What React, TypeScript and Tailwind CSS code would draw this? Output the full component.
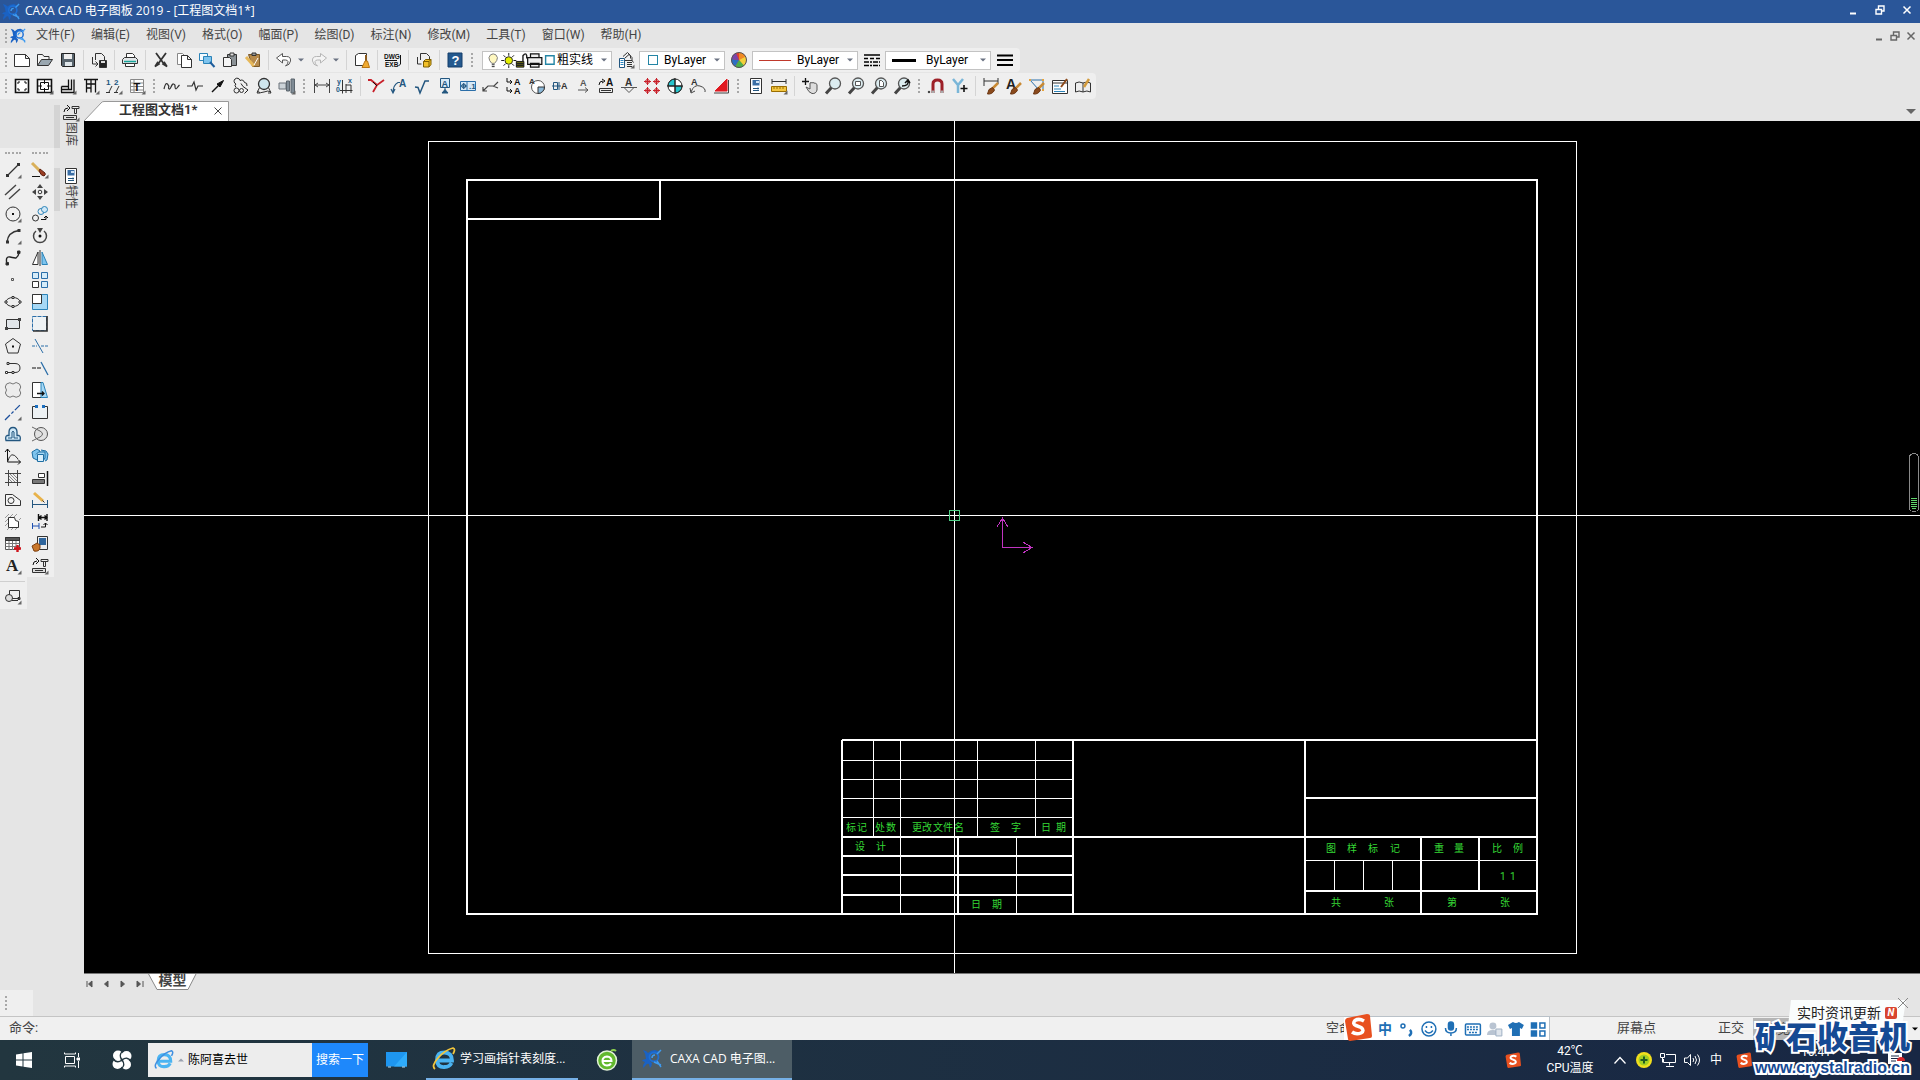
import type { ReactNode } from 'react';

const menus = ['文件(F)', '编辑(E)', '视图(V)', '格式(O)', '幅面(P)', '绘图(D)', '标注(N)', '修改(M)', '工具(T)', '窗口(W)', '帮助(H)'];

const A = ({ x = 4, y = 12, s = 10, c = '#333', t = 'A' }: any) => (
  <text x={x} y={y} fontSize={s} fontWeight="bold" fill={c} stroke="none" fontFamily="Liberation Sans, sans-serif">{t}</text>
);

const corner = <path d="M16.500 12.500v4h-4z" fill="#666" stroke="none" />;
const lens = <><path d="M6.500 9.500 1 15.500" stroke="#444" strokeWidth="3" /><circle cx="10" cy="5.500" r="5.500" fill="#dcecf0" stroke="#555" strokeWidth="1.300" /></>;
const brush = <><path d="M15 5 9 11" stroke="#c98a35" strokeWidth="2.500" /><path d="M9.500 9.500 6 11.500 4.500 16q5 .5 7-4z" fill="#8b4a1c" stroke="#6b3511" /></>;

// 16x16 drawings, keyed by command
const icons: Record<string, ReactNode> = {
  new: <path d="M.5 2.500h11l4 4v8h-15z M11.500 2.500v4h4" fill="#fff" />,
  open: <><path d="M.5 13.500v-11h5l1.500 2h5v3" fill="#f4f4f4" /><path d="m.5 13.500 4-6h11l-4 6z" fill="#9aa7b0" /></>,
  save: <><path d="M1.500 1.500h13v13h-12l-1-1z" fill="#58646d" stroke="#222" /><path d="M4 2h8v5H4z" fill="#eee" stroke="none" /><path d="M5 10h7v4H5z" fill="#dfe6ea" stroke="none" /></>,
  exp: <><path d="M4.500 8v-6.500h6l3 3V9 M1.500 5v7h5 M4.500 9.500l2.500 2.500-2.500 2.500" /><path d="M8.500 8.500h7v7h-7z" fill="#222" /><path d="M10 9h4v2h-4z" fill="#ddd" stroke="none" /></>,
  print: <><path d="M4.500 5V1.500h6l2 2V5" fill="#fff" /><path d="M2.500 5.500h11l2 2v4h-15v-4z" fill="#e2e6e8" /><path d="M2 9.500h12" stroke="#18a59b" strokeWidth="1.500" /><path d="M3.500 11.500h9v3h-9z" fill="#fff" /></>,
  cut: <><path d="M3 1l8 11 M13 1 5 12" strokeWidth="1.800" /><path d="M2 14.500 4.500 10.500l1.500 1.500z M14 14.500l-2.500-4L10 12z" strokeWidth="1.500" /></>,
  copy: <><path d="M1.500 1.500h5l3 3v8h-8z" fill="#fff" stroke="#888" /><path d="M5.500 3.500h6l4 4v8h-10z M11.500 3.500v4h4" fill="#fff" /></>,
  copybase: <><path d="M.5 1.500h8v7h-8z" fill="#f5fbff" stroke="#2b83b8" /><path d="M4.500 4.500h8v7h-8z" fill="#7ec4ee" stroke="#2b83b8" /><path d="m11 10 4.500 5" stroke="#1e5d9c" strokeWidth="2" /></>,
  paste: <><path d="M5.500 2.500h9v11h-9z" fill="#8b9296" /><path d="M8 1h4v3H8z" fill="#ddd" /><path d="M1.500 5.500h6l2 2v7h-8z" fill="#f5f5f5" /></>,
  match: <><path d="M3.500 2.500h11v12h-7z" fill="#b68a4c" stroke="#7c5a2a" /><path d="M7 1h4v2.500H7z" fill="#999" /><path d="M1 5l8 9" stroke="#e6b85a" strokeWidth="3" /><path d="M13 6 9 13" stroke="#fff" /></>,
  undo: <path d="M6.500 1.500v3h4q4.500 0 4 4.500-.5 4-5 5 3-2 2.500-4.500-.5-1.500-2.500-1.500h-3v3l-6-5z" fill="#fff" stroke="#555" />,
  redo: <path d="M9.500 1.500v3h-4Q1 4.500 1.500 9q.5 4 5 5-3-2-2.500-4.500Q4.500 8 6.500 8h3v3l6-5z" fill="#f4f4f4" stroke="#b5b5b5" />,
  clean: <><path d="M1.500 3.500l3-2h8v12h-11z" fill="#fff" /><path d="M12 3v7" stroke="#8b5a1c" strokeWidth="2" /><path d="m11 9-3 6.500h7.500l-2-6.500z" fill="#efaa32" stroke="#b87614" /></>,
  dwg: <><A x={-1} y={6.500} s={6.500} c="#111" t="DWG" /><A x={0} y={15} s={6.500} c="#111" t="EXB" /><path d="M0 8.500h12 M15.500 3v9l-2 2" stroke="#111" /></>,
  block: <><path d="M4.500 8v-6.500h6l3 3V8 M1.500 5v7h4" /><path d="m7.500 9.500 2-2h5.500v5l-2 2.500h-5.500z" fill="#f2c028" stroke="#7d5f00" /><path d="M7.500 9.500h5.500V15 m0-5.500 2-2" stroke="#7d5f00" /></>,
  help: <><path d="M1 1h14v14H1z" fill="#24598e" stroke="#153f6b" /><A x={4.500} y={13} s={13} c="#fff" t="?" /></>,
  layers: <><path d="M5 4.500 9.500.5l3 3v3 M7 6l4-3.500 3 3V9 M7 8.500h7l1.500 2" /><path d="M1.500 6.500h5v9h-5z" fill="#fff" stroke="#23567f" /><path d="M2.500 8.500h3m-3 2h3m-3 2h3" stroke="#2784c0" /><path d="M9 10.500h5M9 12.500h5M9 14.500h5" />{corner}</>,
  wheel: <><circle cx="8" cy="8" r="7.500" fill="#e23d2f" stroke="none" /><path d="M8 8V.5a7.500 7.500 0 0 1 6.500 4z" fill="#f08a24" stroke="none" /><path d="M8 8l6.500-3.500a7.500 7.500 0 0 1-2 9.500z" fill="#f4d03a" stroke="none" /><path d="M8 8l5 5.500a7.500 7.500 0 0 1-9 1z" fill="#4fb04a" stroke="none" /><path d="M8 8l-4 6.500A7.500 7.500 0 0 1 .5 7z" fill="#2e6fc4" stroke="none" /><path d="M8 8 .5 7A7.500 7.500 0 0 1 5 1z" fill="#7b45a8" stroke="none" /><circle cx="8" cy="8" r="7.500" stroke="#555" /></>,
  ltype: <><path d="M0 3h16" stroke="#000" strokeWidth="1.500" /><path d="M0 6.500h16" stroke="#000" strokeWidth="1.500" strokeDasharray="4 2" /><path d="M0 10h16M0 13.500h16" stroke="#000" strokeWidth="1.500" strokeDasharray="5 1 2 1" /></>,
  lweight: <path d="M0 3.500h16M0 8h16M0 13h16" stroke="#000" strokeWidth="2.200" />,

  sheet: <><path d="M1.500 1.500h13v13h-13z" fill="#fff" stroke="#111" strokeWidth="1.600" /><path d="M4 6V4h2m4 0h2v2m0 4v2h-2m-4 0H4v-2" stroke="#111" /></>,
  frame: <><path d="M.5 1.500h14v13H.5z" fill="#fff" stroke="#111" strokeWidth="1.600" /><path d="M3.500 4.500h8v7h-8z M7.500 1v5m0 4v4M0 8h5m5 0h5" stroke="#111" />{corner}</>,
  title: <><path d="M1.500 8.500h7v-7M1 14.500h13v-13M11.500 1.500v10H1M1.500 8.500v6M8.500 8.500v3" stroke="#111" strokeWidth="1.300" />{corner}</>,
  para: <><path d="M1 1.500h14M3.500 1.500v13M3.500 6h9M8 1.500v13M12.500 1.500v13M3.500 10h5" stroke="#111" strokeWidth="1.300" />{corner}</>,
  serial: <><A x={0} y={7} s={8} c="#23567f" t="1" /><A x={8} y={7} s={8} c="#23567f" t="2" /><path d="M3 14l3-6m4 6 3-6M0 14.500h4m4 0h4" />{corner}</>,
  btable: <><path d="M1.500 1.500h13v13h-13z M1.500 5h13M1.500 8.500h13M1.500 12h13 M5 1.500v13" fill="#fff" stroke="#888" /><A x={4.500} y={12.500} s={11} c="#111" t="T" />{corner}</>,
  wave: <path d="M0 11q1.500-7 3.500-5t1 4q1 2.500 2.500-1t2.500-3q2 .5 1.500 3 .5 3 2 1t2.500-3" strokeWidth="1.200" />,
  breakl: <path d="M0 8h5l2-4 2 8 2-4h5" strokeWidth="1.200" />,
  arrow: <><path d="M2 14 9 7" stroke="#111" strokeWidth="1.500" /><path d="M13.500 2.500 7 6l3 3z" fill="#111" stroke="#111" /></>,
  gear: <><path d="M3 6a3 3 0 1 1 4-3.500 3 3 0 0 1 4.500 2q3 0 2.500 3.500M3 6q-2 1 0 3.500M8 5.500l2 3 5 3.500-3.500 3.500" stroke="#222" /><circle cx="3.500" cy="12.500" r="2.500" /><circle cx="8.500" cy="12.500" r="2" /></>,
  magnify: <><circle cx="8" cy="6" r="5.500" fill="#cfe6ee" strokeWidth="1.300" /><path d="M3.500 9.500 1 15h3m8.500-5.500L15 15h-3" /><path d="M1 13q3 3 7 1t7 0" /></>,
  bolt: <><path d="M0 5h7v6H0z" fill="#ccd3d8" stroke="#6a737b" /><path d="M7.500 3h3v10h-3z M12 1h3.500v14H12z" fill="#7f8b95" stroke="#5b656d" />{corner}</>,
  dim: <path d="M.5 1v14M15.500 1v14 M1 7h14M4 5 1 7l3 2m8-4 3 2-3 2" stroke="#444" />,
  dimcoord: <><path d="M5.500 2v13.500M3 12.500h12.500M9 6v9M9 7h5v8" /><A x={0} y={6} s={7} c="#23567f" t="y" /><A x={11} y={5} s={7} c="#23567f" t="x" /><A x={-1} y={14} s={7} c="#23567f" t="0" /></>,
  chamfer: <><path d="M0 2h3l6 5" stroke="#c8202a" strokeWidth="1.800" /><path d="M5 14 9 7l7-5" stroke="#c8202a" strokeWidth="1.800" /><path d="m5 4 4 4" stroke="#111" /></>,
  leader: <><path d="M2 15q0-8 5-10.500h2M0 11l2 4 2-4" stroke="#23567f" strokeWidth="1.200" /><A x={8} y={9} s={10} c="#23567f" /></>,
  rough: <path d="M1 9l3 .5L6 15l5-12h4" stroke="#23567f" strokeWidth="1.500" />,
  datum: <><path d="M3.500.5h9v9h-9z" fill="#d6e9f7" stroke="#23567f" /><A x={4.500} y={8.500} s={9} c="#23567f" /><path d="M8 10v2m-3 3h6l-3-3.500z" fill="#23567f" stroke="#23567f" /></>,
  tol: <><path d="M.5 3.500h15v9H.5z M7 3.500v9" fill="#d6e9f7" stroke="#2b6ea8" /><circle cx="3.700" cy="8" r="2" stroke="#23567f" /><path d="M1 8h6M3.700 5v6" stroke="#23567f" /><A x={9} y={11} s={8} c="#23567f" t=".1" /></>,
  weld: <path d="M0 13l5-5h6l4-4M0 9v4h4 M10 8l5 2" stroke="#444" strokeWidth="1.200" />,
  sect: <><A x={8} y={7} s={9} c="#111" /><A x={8} y={16} s={9} c="#111" /><path d="M1 0v4h5M4 2l2 2-2 2M1 9v4h5m-2-2 2 2-2 2" stroke="#111" /></>,
  rot: <><circle cx="9" cy="9" r="6.500" fill="#fff" stroke="#555" /><path d="M9 9h6.500a6.500 6.500 0 0 1-6.500 6.500z" fill="#8bb8d8" /><A x={0} y={6} s={8} /></>,
  mirra: <><path d="M1.500 4.500h4v7h-4zM0 8h9M7 4v8" stroke="#23567f" /><A x={9} y={11} s={9} /></>,
  aright: <><A x={5} y={8} s={9} c="#555" /><path d="M3 12h10m-3-2.500 3 2.500-3 2.500" stroke="#555" /></>,
  stamp: <><path d="M1 7q0-4 4-4M4 1l3 2-3 2" stroke="#111" /><A x={8} y={8} s={10} c="#111" /><path d="M1.500 10.500h13v4h-13z M3 12.500h10" fill="#eee" /></>,
  aflat: <><A x={4} y={8} s={10} /><path d="M0 9.500h16M3 9.500l5 5 5-5" stroke="#555" /></>,
  reddots: <g stroke="#c8202a"><path d="M0 3.500h7M3.500 0v7M9 3.500h7M12.500 0v7M0 12.500h7M3.500 9v7M9 12.500h7M12.500 9v7" /><circle cx="3.500" cy="3.500" r="2" /><circle cx="12.500" cy="3.500" r="2" /><circle cx="3.500" cy="12.500" r="2" /><circle cx="12.500" cy="12.500" r="2" /></g>,
  center: <><circle cx="8" cy="8" r="7" fill="#fff" stroke="#222" /><path d="M8 8V1a7 7 0 0 0-7 7zM8 8v7a7 7 0 0 0 7-7z" fill="#27c4cc" stroke="#222" /><path d="M8 0v16M0 8h16" stroke="#222" /></>,
  arcdim: <><A x={1} y={7} s={9} /><path d="M1 14Q4 6 10 8t5 6M0 10l1 5 4-2" stroke="#444" /></>,
  taper: <><path d="M14 1v12H2z" fill="#e01820" stroke="#e01820" /><path d="M1 15h14.500V2" stroke="#444" /></>,
  props: <><path d="M2.500.5h11v15h-11z" fill="#fff" /><path d="M4.500 2h7v5.500h-7z" fill="#3a6ea5" stroke="none" /><path d="M8 3h3v2H8z" fill="#cfe3f5" stroke="none" /><path d="M5 10.500h6M5 12.500h6M10 9.500v2" stroke="#23567f" /></>,
  measure: <><path d="M1 1v5M15 1v5M1 3.500h14" /><path d="M.5 8.500h15v5H.5z" fill="#f3c641" stroke="#9a6d00" /><path d="M3 9v2m3-2v2m3-2v2m3-2v2" stroke="#9a6d00" />{corner}</>,
  pan: <><path d="M3.500 0v7M0 3.500h7" stroke="#111" strokeWidth="1.300" /><path d="M4 9l4 2V5q1-1 2 0 1-1 2 0 2 0 3 1.500V12q-1 4-5 3.500-3-.5-6-6.500z" fill="#ddd" stroke="#555" /></>,
  zoom: lens,
  zoomwin: <>{lens}<path d="M7.500 3.500h5v4h-5z" fill="#fff" stroke="#555" /></>,
  zoompage: <>{lens}<path d="M8.500 2.500h2l2 2v4h-4z" fill="#fff" stroke="#555" /></>,
  zoomback: <>{lens}<path d="M8 8q7 0 6-5M11 5l3-3 2 3" stroke="#111" strokeWidth="1.500" /></>,
  magnet: <><path d="M4 15V6q0-4 4.500-4T13 6v9" stroke="#9d2027" strokeWidth="3" /><path d="M4 12.500V15m9-2.500V15" stroke="#aaa" strokeWidth="3" /><circle cx="0" cy="14" r=".8" fill="#111" /></>,
  snap: <><path d="M1 1l5 6L11 1M6 7v8" stroke="#7ab6d8" strokeWidth="2.500" /><path d="M12 7v7m-3.500-3.500h7" stroke="#111" strokeWidth="1.600" /></>,
  dimbrush: <><path d="M1 0v8M15 0v6M1 3h14" />{brush}</>,
  txtbrush: <><A x={0} y={11} s={14} c="#222" />{brush}</>,
  blkbrush: <><path d="M1 2h13v10M1 2l9 10" stroke="#2b6ea8" /><path d="M0 1h2v2H0zM13 1h2v2h-2zM13 11h2v2h-2z" fill="#e8a33a" stroke="none" />{brush}</>,
  style: <><path d="M.5 2.500h15v13H.5z M.5 5h15" fill="#fff" /><path d="M2 8h5m-5 3h7m-7 2.500h11" stroke="#2b83b8" /><path d="m15 1-6 8" stroke="#8b4a1c" strokeWidth="2" /></>,
  book: <><path d="M8 5q-4-2-7.500 0v9q3.500-2 7.500 0 4-2 7.500 0V5q-3.500-2-7.500 0v9" fill="#eee" /><path d="m14 1-5 8" stroke="#d29a3c" strokeWidth="2.500" /></>,

  line: <><path d="M2.500 13.500l11-11" strokeWidth="1.300" /><path d="M1 12h3v3H1zM12 1h3v3h-3z" fill="#333" stroke="none" />{corner}</>,
  parallel: <path d="M0 11 11 1M4 15 15 5" stroke="#444" strokeWidth="1.400" />,
  circle: <><circle cx="8" cy="8" r="7" /><path d="M7 7h2v2H7z" fill="#111" stroke="none" />{corner}</>,
  arc: <><path d="M2 14Q3 4 14 2.500" strokeWidth="1.300" /><path d="M1 12.500h3v3H1zM12.500 1h3v3h-3z" fill="#333" stroke="none" />{corner}</>,
  spline: <><path d="M2 14Q0 6 5 7t6 1q3-2 2.500-5" stroke="#222" strokeWidth="1.400" /><path d="M1 12.500h2.500V15H1zM12.500 1H15v2.500h-2.500z" fill="#222" /></>,
  point: <path d="M6.500 6.500h2v2h-2z" stroke="#555" />,
  ellipse: <><ellipse cx="8" cy="8" rx="7" ry="4.500" /><path d="M0 7h2v2H0zM14 7h2v2h-2zM7 2.500h2v2H7zM7 11.500h2v2H7z" fill="#fff" stroke="#333" /></>,
  rect: <><path d="M1.500 3.500h13v9h-13z" fill="#e2e6ea" /><path d="M0 11h3v3H0zM13 2h3v3h-3z" fill="#444" stroke="none" /></>,
  poly: <><path d="M8 .5 15.500 6 13 15H3L.5 6z" /><path d="M7 7.500h2v2H7z" fill="#111" stroke="none" /></>,
  pline: <><path d="M4 3.500h6q5 0 5 4.500t-5 4.500H2" /><path d="M2 2.500h2v2H2zM.5 11.500h2v2h-2zM7 11.500h2v2H7z" fill="#fff" /></>,
  cloud: <path d="M8 2q3-3 6.500 0 2.500 3 0 6 2.500 3 0 6-3.500 2.500-6.500 0-3 2.500-6 0-3-3-.5-6-2.500-3 0-6Q5-.5 8 2z" fill="#ececec" stroke="#777" />,
  ctrline: <><path d="M0 16 16 0" stroke="#1c4f9c" strokeWidth="1.300" strokeDasharray="7 2 3 2" />{corner}</>,
  offset: <><path d="M1 14.500h14q1-4-1-5h-2V6q0-4.500-4-4.500T4 6v3.500H2q-2 1-1 5z" fill="#cfe8f7" stroke="#23567f" strokeWidth="1.300" /><path d="M3 12h4V6q1-1.500 2 0v6h4" stroke="#23567f" /></>,
  func: <><path d="M2.500 1v13h13M0 4l2.500-3L5 4m8 7.500 2.500 2.500-2.500 2.500" stroke="#111" /><path d="M2.500 14Q6 1 13 11" /></>,
  hatch: <><path d="M3.500 0v16M12.500 0v16M0 3.500h16M0 12.500h16" stroke="#444" /><path d="m4 6 6 6M4 9l3 3M5 4l7 7M8 4l4 4" stroke="#888" /></>,
  region: <><path d="M.5 2.500h7l8 6v5h-15z" fill="#f5f5f5" /><circle cx="6" cy="8.500" r="3" /></>,
  detail: <><path d="M3.500 3.500h6q0 4 4 4v6h-10z" fill="#fff" /><path d="m0 4 4-4M0 8l3-3M0 12l3-3M5 3l3-3M9 3l3-3M14 6l2-2M2 16l2-2m2 2 2-2m2 2 2-2" stroke="#999" /></>,
  table: <><path d="M.5 1.500h14v12H.5z" fill="#fff" stroke="#555" /><path d="M.5 1.500h14v3H.5z" fill="#555" /><path d="M.5 7.500h14M.5 10.500h14M4 5v9M7.500 5v9M11 5v9" stroke="#777" /><path d="M12.500 9v7M9 12.500h7" stroke="#d0151c" strokeWidth="2.400" /></>,
  text: <><text x="1" y="13" fontSize="17" fontWeight="bold" fill="#222" stroke="none" fontFamily="Liberation Serif, serif">A</text>{corner}</>,
  shape: <><path d="M4.500 2.500h10v8h-10z" /><circle cx="4" cy="10" r="3.500" fill="#ddd" /><path d="M7 12.500h6M13 9.500h2v2h-2z" />{corner}</>,

  erase: <><path d="M0 1l8 8" stroke="#d9b05a" strokeWidth="3" /><path d="m8 7 5 4q1 2-1 3-3 0-5-5z" fill="#9b3d22" stroke="#5d2010" /><path d="M0 14.500h8" stroke="#111" />{corner}</>,
  move: <><path d="M8 0l3 4H5zM8 16l3-4H5zM0 8l4-3v6zM16 8l-4-3v6z" fill="#444" stroke="none" /><circle cx="8" cy="8" r="1.800" /></>,
  mcopy: <><circle cx="3.500" cy="12" r="3" /><circle cx="9" cy="5.500" r="3" stroke="#2b83b8" /><circle cx="12.500" cy="3.500" r="3" fill="#cfe8f7" stroke="#2b83b8" /><path d="M9 13.500h5V10m-2 2 2-2 2 2" stroke="#111" /></>,
  rotate: <><path d="M4 3a6.500 6.500 0 1 0 8 0" stroke="#444" strokeWidth="1.500" /><path d="M5 0h6L8 5z" fill="#444" stroke="none" /><circle cx="8" cy="8" r="1.500" fill="#111" stroke="none" /></>,
  mirror: <><path d="M.5 14.500 6 2v12.500z" fill="#fff" /><path d="M15.500 14.500 10 2v12.500z" fill="#7ec4ee" stroke="#2b83b8" /><path d="M8 0v16" /></>,
  array: <><path d="M.5 9.500h6v6h-6z" fill="#fff" /><path d="M.5.5h6v6h-6zM9.500.5h6v6h-6zM9.500 9.500h6v6h-6z" fill="#d6ecf9" stroke="#2b6ea8" /></>,
  scale: <><path d="M.5.5h15v15H.5z" fill="#a6d8f5" stroke="#2b83b8" /><path d="M.5.5h9v9h-9z" fill="#fff" /></>,
  stretch: <><path d="M.5.5h14v14H.5z" fill="#eef2f4" stroke="#2b6ea8" strokeDasharray="4 1" /><path d="M15 0v15H1" stroke="#333" strokeWidth="1.700" /></>,
  trim: <><path d="M0 8h5M9 8h7" stroke="#2b6ea8" strokeDasharray="3 1" /><path d="m3 1 8 14" stroke="#2b6ea8" /></>,
  extend: <><path d="M0 8h9" stroke="#111" strokeDasharray="4 1" /><path d="m9 2 7 13" stroke="#2b6ea8" strokeWidth="1.300" /></>,
  scalex: <><path d="M.5.5h10v15H.5z" fill="#fff" /><path d="M9 .5h2l4.500 15H9z" fill="#a6d8f5" stroke="#2b83b8" /><path d="M5 11.500h7m-2-2 2 2-2 2" stroke="#111" strokeWidth="1.300" /></>,
  brk: <><path d="M4 2.500H.5v12h15v-12H12" fill="#eef2f4" /><path d="M3 1h3v3H3zM10 1h3v3h-3z" fill="#1c6fc0" stroke="none" /></>,
  chain: <><circle cx="9" cy="8" r="6.500" fill="#e2e2e2" stroke="#555" /><path d="M0 1l8 4q5 3 0 6l-8 4" stroke="#666" /></>,
  explode: <><path d="m0 4 5-3 3 2-3 9-4-2zM9 2l5 1 2 3-1 6-2 1" fill="#7ec4ee" stroke="#1e6ea3" /><path d="M4 6.500 6.500 4H13v6l-2 3" fill="#a6d8f5" stroke="#1e6ea3" /><path d="M5.500 6.500h6v7h-6z" fill="#d8effc" stroke="#1e6ea3" /></>,
  align: <><path d="M.5 9.500h12v4H.5z" fill="#777" /><path d="M6.500 3.500h6v4h-6z" fill="#fff" /><path d="M15.500 1v15" stroke="#111" strokeWidth="1.500" /></>,
  dimedit: <><path d="M.5 8v8M15.500 8v8M1 12.500h14" stroke="#23567f" /><path d="m2 1 9 8" stroke="#e8b24a" strokeWidth="3" /><path d="m10.500 8.500 2 2" stroke="#333" /></>,
  dimswap: <><path d="M6.500 0v7M15 0v7M6.500 3.500H15M9.500 1.500 7 3.500l2.500 2m3-4 2.500 2-2.500 2" stroke="#111" strokeWidth="1.400" /><path d="M.5 9v6M7 9v6M1 12h6" stroke="#1c4fb0" /><path d="M9 13h4.500V9m-2 2 2-2 2 2" stroke="#111" /></>,
  propbrush: <><path d="M5.500.5h10v13h-10z" fill="#eee" /><path d="M7 2h7v7H7z" fill="#2f659c" stroke="none" /><path d="M8 9 5 7l-5 3 2 5q5 1 6-3z" fill="#c9772b" stroke="#7c3f10" /></>,
  toolset: <><path d="M1 7q0-4 4-4M4 0l3 3-3 3" stroke="#111" /><path d="M9 1.500h7v2H9zM11.500 3.500h2v5h-2z" fill="#eee" /><path d="M.5 10.500h13v4H.5zM3 12.500h8" fill="#ddd" />{corner}</>,
};

const row1a = ['new', 'open', 'save', '|', 'exp', '|', 'print', '|', 'cut', 'copy', 'copybase', 'paste', 'match', '|', 'undo', 'v', 'redo', 'v', '|', 'clean', '|', 'dwg', '|', 'block', '|', 'help', ':'];
const row2 = ['sheet', 'frame', 'title', 'para', 'serial', 'btable', ':', 'wave', 'breakl', 'arrow', 'gear', 'magnify', 'bolt', ':', 'dim', 'dimcoord', '|', 'chamfer', 'leader', 'rough', 'datum', 'tol', 'weld', 'sect', 'rot', 'mirra', 'aright', 'stamp', 'aflat', 'reddots', 'center', 'arcdim', 'taper', ':', 'props', 'measure', '|', 'pan', 'zoom', 'zoomwin', 'zoompage', 'zoomback', ':', 'magnet', 'snap', '|', 'dimbrush', 'txtbrush', 'blkbrush', 'style', 'book'];
const drawTools = ['line', 'parallel', 'circle', 'arc', 'spline', 'point', 'ellipse', 'rect', 'poly', 'pline', 'cloud', 'ctrline', 'offset', 'func', 'hatch', 'region', 'detail', 'table', 'text'];
const editTools = ['erase', 'move', 'mcopy', 'rotate', 'mirror', 'array', 'scale', 'stretch', 'trim', 'extend', 'scalex', 'brk', 'chain', 'explode', 'align', 'dimedit', 'dimswap', 'propbrush', 'toolset'];

function Icon({ name }: { name: string }) {
  return (
    <svg viewBox="0 0 16 16" className="size-4 shrink-0 overflow-visible" fill="none" stroke="#333">
      {icons[name]}
    </svg>
  );
}

function Caret({ className = 'fill-gray-500' }: { className?: string }) {
  return <svg viewBox="0 0 8 4" className={`w-1.5 h-1 shrink-0 ${className}`}><path d="M0 0h8L4 4z" /></svg>;
}

function Grip() {
  return <span className="w-3 shrink-0 flex justify-center"><span className="h-3.5 border-l-2 border-dotted border-[#a8a8a8]" /></span>;
}

function ToolItems({ items }: { items: string[] }) {
  return (
    <>
      {items.map((n, i) => {
        if (n === '|') return <span key={i} className="w-2 shrink-0 flex justify-center"><span className="h-5 w-px bg-[#d4d4d4]" /></span>;
        if (n === ':') return <Grip key={i} />;
        if (n === 'v') return <button key={i} aria-label="more" className="w-3 shrink-0 flex justify-center"><Caret /></button>;
        return <button key={i} aria-label={n} className="w-[23px] shrink-0 flex justify-center"><Icon name={n} /></button>;
      })}
    </>
  );
}

function Combo({ label, value, width, children }: { label: string; value: string; width: string; children: ReactNode }) {
  return (
    <label className={`h-[19px] shrink-0 bg-white border border-[#c3c3c3] flex items-center pr-1 text-xs text-black ${width}`}>
      {children}
      <select aria-label={label} className="appearance-none bg-transparent flex-1 min-w-0 outline-none leading-4">
        <option>{value}</option>
      </select>
      <Caret />
    </label>
  );
}

function CaxaLogo({ className = 'size-4' }: { className?: string }) {
  return (
    <svg viewBox="0 0 20 20" className={`shrink-0 ${className}`} fill="none">
      <path d="M1 1q4 1 5 3 3-3 7-3 4 1 5 4-5-3-8-1-3 3-2 7 0 2 2 3 0 3-2 5l-1-4q-2-1-3 1l-3 3q0-4 2-6-2-1-3-1 1-2 4-2 0-5-3-9z" fill="#1a62c4" />
      <circle cx="12" cy="8" r="4.500" stroke="#1d6fd6" strokeWidth="1.800" />
      <path d="M10 9q0-3 3-3M15 12l4 6M12 13l7 3M15 5l4-4" stroke="#3e9bf0" strokeWidth="1.500" />
    </svg>
  );
}

function WinControls({ color, gap }: { color: string; gap: string }) {
  return (
    <div className={`flex items-center ${gap} ${color}`}>
      <button aria-label="最小化"><svg viewBox="0 0 10 10" className="size-2.5" stroke="currentColor" strokeWidth="2"><path d="M2 8.500h6" /></svg></button>
      <button aria-label="还原"><svg viewBox="0 0 10 10" className="size-2.5" fill="none" stroke="currentColor" strokeWidth="1.400"><path d="M1 4.500h5.500V9H1zM3.500 4V1H9v5H7" /></svg></button>
      <button aria-label="关闭"><svg viewBox="0 0 10 10" className="size-2.5" stroke="currentColor" strokeWidth="1.500"><path d="m1.500 1.500 7 7m0-7-7 7" /></svg></button>
    </div>
  );
}

// sheet labels, one x per character
const labels: { t: string; xs: number[]; y: number }[] = [
  { t: '标记', xs: [851, 862], y: 831 },
  { t: '处数', xs: [880, 891], y: 831 },
  { t: '更改文件名', xs: [917, 927, 938, 948, 959], y: 831 },
  { t: '签字', xs: [995, 1016], y: 831 },
  { t: '日期', xs: [1046, 1061], y: 831 },
  { t: '设计', xs: [860, 881], y: 850 },
  { t: '日期', xs: [976, 997], y: 908 },
  { t: '图样标记', xs: [1331, 1352, 1373, 1395], y: 852 },
  { t: '重量', xs: [1439, 1459], y: 852 },
  { t: '比例', xs: [1497, 1518], y: 852 },
  { t: '11', xs: [1505, 1515], y: 880 },
  { t: '共张', xs: [1336, 1389], y: 906 },
  { t: '第张', xs: [1452, 1505], y: 906 },
];

function Drawing() {
  return (
    <svg viewBox="84 121 1836 852" className="block size-full" fill="none" stroke="#fff" shapeRendering="crispEdges">
      <path d="M428.500 141.500h1148v812h-1148z" />
      <path strokeWidth="2" d="M467 180h1070v734H467z M467 219h193v-39" />
      <path strokeWidth="2" d="M842 740h695M842 740v174M1073 740v174M1305 740v174M842 837h695M958 837v77M842 856h231M842 875h231M842 895h231M1305 798h232M1305 891h232M1421 837v77M1479 837v54" />
      <path d="M842 760.500h231M842 779.500h231M842 798.500h231M842 817.500h231M873.500 740v97M900.500 740v174M977.500 740v97M1035.500 740v97M1016.500 837v77M1305 860.500h232M1334.500 860v31M1363.500 860v31M1392.500 860v31" />
      {labels.map((l, i) => (
        <text key={i} x={l.xs.map((x) => x - 5).join(' ')} y={l.y} fontSize="10" fill="#35d835" stroke="none">{l.t}</text>
      ))}
      {/* crosshair */}
      <path d="M954.500 0v1100M0 515.500h2000" />
      <path d="M949.500 510.500h10v10h-10z" stroke="#4ecf86" />
      {/* UCS axes */}
      <path d="M1002.500 518v29.500h30M997 527l5.500-9 5.500 9M1023 542l9 5.500-9 5.500" stroke="#c034c0" />
      <rect x="1909.500" y="453.500" width="9" height="58" rx="4" stroke="#8a8a8a" />
      <path d="M1911 498.500h6M1911 500.500h6M1911 502.500h6M1911 504.500h6M1911 506.500h6M1912 508.500h4" stroke="#5fd66b" />
    </svg>
  );
}

function SogouS({ className }: { className: string }) {
  return (
    <svg viewBox="0 0 28 28" className={`shrink-0 ${className}`} fill="none">
      <path d="M3 5 23 1q3 0 3 2l2 20q0 2-2 2L6 28q-2 0-2-2L1 8q0-2 2-3z" fill="#e8501f" />
      <path d="M20 8q-5-3-9-.5-3 3.500 1 5l5 2q4 3 0 5.500-5 2-9-1" stroke="#fff" strokeWidth="3.500" />
    </svg>
  );
}

function IELogo({ className, ring = '#f3c63c' }: { className: string; ring?: string }) {
  return (
    <svg viewBox="0 0 24 24" className={`shrink-0 ${className}`} fill="none">
      <path d="M5 13.500h15q0-8-7.500-8T5 13t7.500 7q5 0 7-4" stroke="#4ab4f2" strokeWidth="3.800" />
      <path d="M3 22q-4-3 3-11T21 1q3 1 0 6" stroke={ring} strokeWidth="1.800" />
    </svg>
  );
}

function ImeBar() {
  return (
    <div className="absolute right-[370px] bottom-0 h-6 w-[206px] bg-white border-r border-t border-[#b9c1c8] flex items-center pl-[30px] text-[#1f6fb5]">
      <SogouS className="size-7 absolute left-0 -top-1" />
      <span className="w-[22px] shrink-0 text-center text-sm font-bold">中</span>
      <svg viewBox="0 0 22 16" className="w-[22px] h-4" fill="none" stroke="currentColor"><circle cx="7" cy="5" r="2" strokeWidth="1.500" /><path d="M14 9q3 3-1 6" strokeWidth="2.500" /></svg>
      <svg viewBox="0 0 22 16" className="w-[22px] h-4" fill="none" stroke="currentColor" strokeWidth="1.500"><circle cx="11" cy="8" r="7" /><path d="M8.500 5v2m5-2v2M7 9.500q4 5 8 0" /></svg>
      <svg viewBox="0 0 22 16" className="w-[22px] h-4" fill="none" stroke="currentColor" strokeWidth="1.500"><rect x="8.500" y="1" width="5" height="8" rx="2.500" fill="currentColor" /><path d="M5.500 7q0 5 5.500 5t5.500-5M11 12v3" /></svg>
      <svg viewBox="0 0 22 16" className="w-[22px] h-4" fill="none" stroke="currentColor" strokeWidth="1.500"><rect x="3.500" y="3" width="15" height="11" rx="1" /><path d="M5 6h12M5 8.500h12M7 11.500h8" strokeDasharray="2 1" /></svg>
      <svg viewBox="0 0 22 16" className="w-[22px] h-4" fill="#b9c4d2"><circle cx="10" cy="5" r="3.500" /><path d="M4 14q0-5 6-5t5 5z" /><path d="M13 8h6v7h-6z" fill="#dfe5ec" stroke="#9fb0c4" /></svg>
      <svg viewBox="0 0 22 16" className="w-[22px] h-4" fill="currentColor"><path d="m3 4 5-3q3 2 6 0l5 3-2 4-2-1v8H7V7L5 8z" /></svg>
      <svg viewBox="0 0 22 16" className="w-[22px] h-4" fill="none" stroke="currentColor" strokeWidth="1.500"><path d="M4.500 2h5v5h-5zM4.500 10h5v5h-5z" fill="currentColor" /><path d="M13 2h5v5h-5zM13 10h5v5h-5z" /></svg>
    </div>
  );
}

export default function App() {
  return (
    <div className="relative h-screen flex flex-col overflow-hidden bg-[#e5e5e5] text-[13px] leading-4 text-[#444] font-['Roboto','Noto_Sans_CJK_SC',sans-serif]">
      {/* Title bar */}
      <header className="h-[23px] shrink-0 bg-[#2a5699] text-white flex items-center pl-0.5 pr-2">
        <CaxaLogo className="size-[18px]" />
        <h1 className="ml-[5px] flex-1 pb-0.5 text-xs font-['Open_Sans','Noto_Sans_CJK_SC',sans-serif]">CAXA CAD 电子图板 2019 - [工程图文档1*]</h1>
        <WinControls color="text-white pb-1" gap="gap-[17px]" />
      </header>

      {/* Menu bar */}
      <nav className="h-[25px] shrink-0 flex items-center pr-1">
        <span className="w-2.5 flex"><Grip /></span>
        <CaxaLogo />
        <div className="flex flex-1 gap-4 pl-2.5 pb-0.5 text-xs">
          {menus.map((m) => <button key={m} className="whitespace-nowrap">{m}</button>)}
        </div>
        <WinControls color="text-[#666]" gap="gap-1.5" />
      </nav>

      {/* Toolbars */}
      <div className="flex shrink-0">
        <div className="h-6 bg-[#efefef] rounded-r flex items-center pr-1">
          <span className="w-2.5 shrink-0 flex"><Grip /></span>
          <ToolItems items={row1a} />
          <div className="flex items-center gap-0.5 pl-1">
            <Combo label="图层" value="粗实线" width="w-[130px]">
              <svg viewBox="0 0 74 18" className="w-[70px] h-[17px] ml-1 shrink-0" fill="none" stroke="#222">
                <path d="M5 12q-3-3-3-6 1-4 4.500-4T11 6q0 3-3 6z" fill="#fff8c0" stroke="#777" /><path d="M5 13.500h3M5 15.500h3" />
                <circle cx="23" cy="9" r="4" fill="#e4f000" /><path d="M23 1v3m0 10v3M15 9h3m10 0h3M17.500 3.500l2 2m7 7 2 2m0-11-2 2m-7 7-2 2" stroke="#111" />
                <path d="M31 10h8v6h-8z" fill="#77780c" stroke="#111" /><path d="M38 10V4q3-4 4 0v3M31 12h8M31 14h8" strokeWidth="1.500" />
                <path d="M46 6V2h9v4M43 6h15v7H43zM46 12h9v4h-9z" fill="#eee" stroke="#111" strokeWidth="1.300" />
                <path d="M62 4h9v9h-9z" fill="#fff" stroke="#2385a5" strokeWidth="1.500" />
              </svg>
            </Combo>
            <ToolItems items={['layers']} />
            <Combo label="颜色" value="ByLayer" width="w-[86px]">
              <span className="size-2.5 ml-2 mr-1.5 border border-[#2385a5] bg-white shrink-0" />
            </Combo>
            <ToolItems items={['wheel']} />
            <Combo label="线型" value="ByLayer" width="w-[106px]">
              <span className="w-8 h-px mx-1.5 bg-[#c0392b] shrink-0" />
            </Combo>
            <ToolItems items={['ltype']} />
            <Combo label="线宽" value="ByLayer" width="w-[106px]">
              <span className="w-6 h-[3px] ml-1.5 mr-2.5 bg-black shrink-0" />
            </Combo>
            <ToolItems items={['lweight']} />
          </div>
        </div>
      </div>
      <div className="flex shrink-0 mt-px">
        <div className="h-[26px] bg-[#efefef] rounded-r flex items-center pr-0.5">
          <span className="w-2.5 shrink-0 flex"><Grip /></span>
          <ToolItems items={row2} />
        </div>
      </div>

      <main className="flex-1 min-h-0 flex">
        {/* Left tool columns */}
        <aside className="w-[84px] shrink-0 flex flex-col">
          <div className="flex flex-1 min-h-0">
            <div className="w-[54px] flex items-start pt-[49px]">
              {[drawTools, editTools].map((tools, c) => (
                <div key={c} className="w-[27px] pr-0.5 bg-[#efefef] flex flex-col items-center">
                  <span className="h-[11px] w-4 pt-1"><span className="block border-t-2 border-dotted border-[#a8a8a8]" /></span>
                  {tools.map((n) => <button key={n} aria-label={n} className="h-[22px] flex items-center"><Icon name={n} /></button>)}
                  {c === 0 && <button aria-label="shape" className="h-7 w-full mt-1 border-t border-[#cfcfcf] flex items-center justify-center"><Icon name="shape" /></button>}
                </div>
              ))}
            </div>
            <div className="flex flex-col gap-5 pt-1.5">
              {[['toolset', '图库'], ['props', '特性']].map(([icon, name]) => (
                <div key={name} className="flex h-[43px]">
                  <span className="w-1.5 bg-[#d4d4d4] mr-[3px]" />
                  <button className="flex flex-col items-center gap-px text-xs">
                    <Icon name={icon} />
                    <span className="[writing-mode:vertical-rl] [text-orientation:sideways]">{name}</span>
                  </button>
                </div>
              ))}
            </div>
          </div>
          <div className="h-[26px] w-[33px] bg-[#efefef] flex items-center"><Grip /></div>
        </aside>

        <section className="flex-1 min-w-0 flex flex-col">
          {/* Document tabs */}
          <div className="h-[22px] shrink-0 flex items-end justify-between pr-1">
            <div className="relative h-5 w-[145px] flex items-center pl-[35px] text-[#333]">
              <svg viewBox="0 0 145 20" className="absolute inset-0 size-full" fill="#fff" stroke="#999"><path d="M0 20 17 2q1-1.500 3-1.500h124.500V20" /></svg>
              <button className="relative font-bold pb-0.5">工程图文档1*</button>
              <button aria-label="关闭标签" className="relative ml-auto mr-1.5"><svg viewBox="0 0 10 10" className="size-2.5" stroke="#444"><path d="m1.500 1.500 7 7m0-7-7 7" /></svg></button>
            </div>
            <button aria-label="标签列表" className="h-5 flex items-center"><svg viewBox="0 0 8 4" className="w-2.5 h-[5px] fill-[#666]"><path d="M0 0h8L4 4z" /></svg></button>
          </div>

          <div className="flex-1 min-h-0 bg-black"><Drawing /></div>

          {/* Layout tabs */}
          <div className="h-[43px] shrink-0 flex items-start border-t border-[#777]">
            <div className="flex pt-[3px] w-16">
              {['M3 4v6M8 4v6L4.500 7z', 'M8 4v6L4.500 7z', 'M5 4v6l3.500-3z', 'M5 4v6l3.500-3zM11 4v6'].map((d) => (
                <button key={d} aria-label="翻页" className="w-4"><svg viewBox="0 0 14 14" className="size-3.5" fill="#555" stroke="#555"><path d={d} /></svg></button>
              ))}
            </div>
            <button className="relative w-[49px] h-4 text-sm leading-4 font-bold">
              <svg viewBox="0 0 49 16" className="absolute inset-0 size-full" fill="#fff" stroke="#888"><path d="m0-1 9 16.500h31L48.500-1" /></svg>
              <span className="relative block -mt-1">模型</span>
            </button>
          </div>
        </section>
      </main>

      {/* Command line / status */}
      <footer className="relative h-6 shrink-0 bg-[#f0f0f0] border-t border-[#c4c4c4] flex items-center">
        <label className="flex flex-1 min-w-0 items-center pl-[9px] pb-0.5">
          命令:
          <input aria-label="命令" className="flex-1 min-w-0 bg-transparent outline-none h-4" />
        </label>
        <div className="flex w-[594px] items-center">
          <span className="w-[291px] pb-0.5">空命令</span>
          <span className="w-[101px] pb-0.5">屏幕点</span>
          <button className="w-[35px] text-left pb-0.5">正交</button>
          <button className="w-12 h-[22px] bg-[#b5b5b5]">线宽</button>
          <span className="ml-auto pr-0.5"><Caret className="fill-black" /></span>
        </div>
        <ImeBar />
      </footer>

      {/* Taskbar */}
      <div className="h-10 shrink-0 flex items-center text-white text-xs leading-4 bg-linear-to-r from-[#22363f] to-[#182744]">
        <button aria-label="开始" className="w-12 flex justify-center"><svg viewBox="0 0 16 16" className="size-4" fill="#fff"><path d="m0 2.500 6.500-1v6H0zM7.500 1.300 16 0v7.500H7.500zM0 8.500h6.500v6L0 13.500zM7.500 8.500H16V16l-8.500-1.300z" /></svg></button>
        <button aria-label="任务视图" className="w-12 flex justify-center"><svg viewBox="0 0 16 16" className="size-4" fill="none" stroke="#fff"><path d="M1.500 4.500h9v7h-9zM.5 .5v1.500h11V.5M.5 15.500V14h11v1.500M14.500 1v4M14.500 9v7" /><path d="M13 6h3v2h-3z" fill="#fff" /></svg></button>
        <button aria-label="浏览器" className="w-[52px] flex justify-center">
          <svg viewBox="0 0 20 20" className="size-5" fill="#fff">
            <circle cx="6" cy="5.500" r="5" /><circle cx="14.500" cy="6" r="5" /><circle cx="14" cy="14.500" r="5" /><circle cx="5.500" cy="14" r="5" />
            <path d="M11 1q-5 4-1 9M19 11q-4-5-9-1M9 19q5-4 1-9M1 9q4 5 9 1" fill="none" stroke="#22363f" strokeWidth="1.300" />
          </svg>
        </button>
        <form className="h-[34px] w-[220px] bg-[#ededed] flex items-center text-black" onSubmit={(e) => e.preventDefault()}>
          <IELogo className="size-5 ml-1.5" ring="#3f8fe0" />
          <svg viewBox="0 0 8 4" className="w-1.5 h-1 mx-1 fill-gray-400"><path d="M0 4h8L4 0z" /></svg>
          <input aria-label="搜索" defaultValue="陈阿喜去世" className="flex-1 min-w-0 bg-transparent outline-none" />
          <button className="h-full w-14 bg-[#1e88fb] text-white">搜索一下</button>
        </form>
        <button aria-label="桌面" className="w-[58px] flex justify-center pr-0.5">
          <svg viewBox="0 0 21 16" className="w-[21px] h-4"><path d="M0 0h21v14.500H0z" fill="#1e96f0" /><path d="M21 0v14.500H8z" fill="#2fabfa" /><path d="M2 15h3m11 0h3" stroke="#bde" /></svg>
        </button>
        <button className="h-full w-[152px] flex items-center pl-1.5 gap-1 border-b-2 border-[#76b0e6]"><IELogo className="size-6" />学习画指针表刻度...</button>
        <button aria-label="安全浏览器" className="w-[54px] flex justify-center pl-1">
          <svg viewBox="0 0 22 22" className="size-[22px]" fill="none"><circle cx="11" cy="11.500" r="9.500" fill="#62b82e" stroke="#e3f3d8" strokeWidth="1.500" /><path d="M6.500 12h9q0-4-4.500-4.500-4.500.5-4.500 4.500 0 4 4.500 4.500 3 0 4-2" stroke="#fff" strokeWidth="2" /><path d="M15 2q3-2 5 0" stroke="#8bd04f" strokeWidth="2" /></svg>
        </button>
        <button className="h-full w-40 flex items-center pl-2.5 gap-2 bg-[#4d5d66] border-b-2 border-[#76b0e6] font-['Open_Sans','Noto_Sans_CJK_SC',sans-serif]"><CaxaLogo className="size-5" />CAXA CAD 电子图...</button>

        <div className="ml-auto flex items-center">
          <span className="w-[38px] flex justify-center"><SogouS className="size-4" /></span>
          <span className="w-[76px] text-center leading-[17px]">42℃<br />CPU温度</span>
          <button aria-label="显示隐藏的图标" className="w-6 flex justify-center"><svg viewBox="0 0 12 8" className="w-3 h-2" fill="none" stroke="#fff" strokeWidth="1.300"><path d="m.5 7.500 5.500-6 5.500 6" /></svg></button>
          <span className="w-6 flex justify-center"><svg viewBox="0 0 16 16" className="size-4"><circle cx="8" cy="8" r="8" fill="#f2df1d" /><circle cx="8" cy="8" r="5.500" fill="#a5cf22" /><path d="M8 4.500v7M4.500 8h7" stroke="#215c20" strokeWidth="2" /></svg></span>
          <span className="w-6 flex justify-center"><svg viewBox="0 0 16 16" className="size-4" fill="none" stroke="#fff"><path d="M6 2.500h9.500v8h-12V7M9.500 10.500v3M6 14.500h8M.5 1.500h4v4h-4zM2.500 5.500v5" /></svg></span>
          <span className="w-6 flex justify-center"><svg viewBox="0 0 16 16" className="size-4" fill="none" stroke="#fff"><path d="M.5 6v4.500h3l3 3v-11l-3 3.500zM9 6q1.500 2 0 4M11 4q3 4 0 8M13.500 2.500q4 5.500 0 11" /></svg></span>
          <span className="w-6 text-center">中</span>
          <span className="w-8 flex justify-center"><SogouS className="size-4" /></span>
          <span className="w-28 text-center pb-4">16:41</span>
          <button aria-label="通知" className="w-12 flex justify-center"><svg viewBox="0 0 18 16" className="w-[18px] h-4"><path d="M1 1h14v11H8l-3 3v-3H1z" fill="#fff" /><path d="M4 4h8M4 6.500h8M4 9h5" stroke="#182744" /><path d="M10 9a4 4 0 0 1 8 0z" fill="#d8262a" /></svg></button>
        </div>
      </div>

      {/* News popup and site mark */}
      <div className="absolute right-0 bottom-0 w-[167px] h-20 pointer-events-none">
        <div className="absolute right-3.5 top-0 h-[26px] w-[118px] pl-[9px] bg-[#fafdfd] [clip-path:polygon(3px_0,100%_0,114px_100%,0_100%)] flex items-center gap-1 text-sm leading-4 text-[#222]">
          实时资讯更新
          <span className="size-3 bg-[#d8452f] text-white rounded-xs text-[10px] leading-3 font-bold italic text-center">N</span>
        </div>
        <svg viewBox="0 0 10 10" className="absolute right-3 -top-0.5 size-2.5" stroke="#888"><path d="m0 0 10 10m0-10L0 10" /></svg>
        <div className="absolute left-0.5 bottom-[26px] text-[31px] leading-8 font-black whitespace-nowrap text-[#154a94] [-webkit-text-stroke:4px_#fff] [paint-order:stroke_fill]">矿石收音机</div>
        <div className="absolute left-0.5 bottom-0.5 text-base leading-5 font-bold whitespace-nowrap text-[#154a94] [-webkit-text-stroke:4px_#fff] [paint-order:stroke_fill] font-['Liberation_Sans',sans-serif]">www.crystalradio.cn</div>
      </div>
    </div>
  );
}
